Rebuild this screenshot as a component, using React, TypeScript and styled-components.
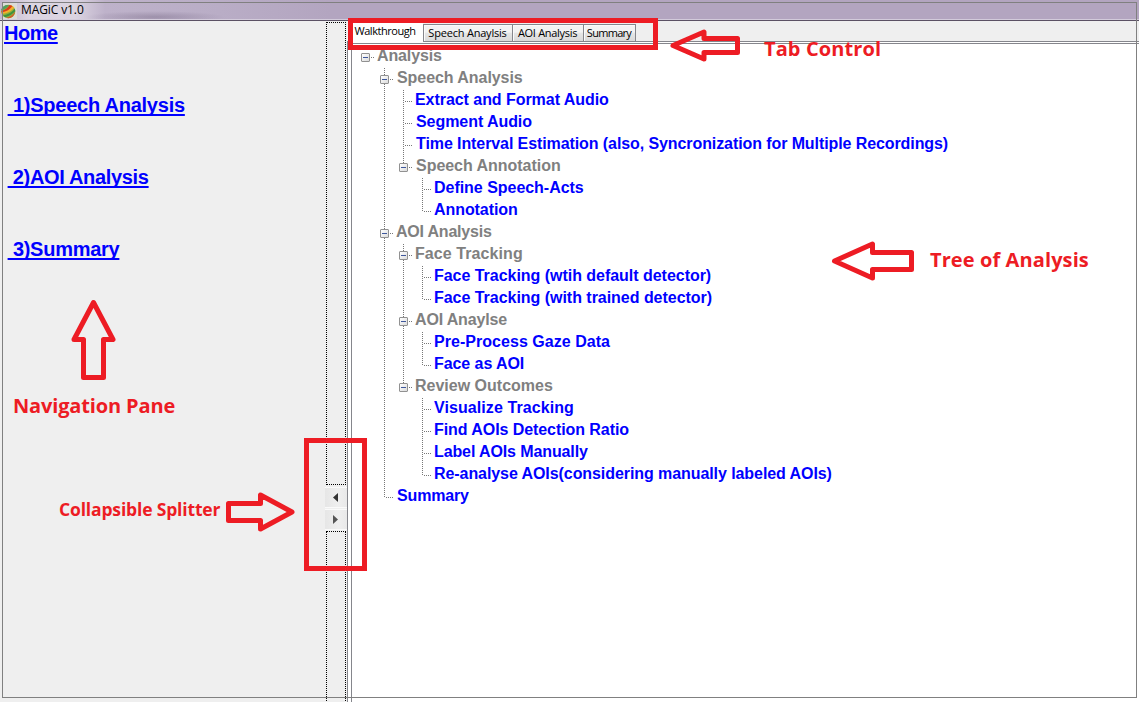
import React from 'react';
import styled, { createGlobalStyle } from 'styled-components';

const RED = '#ed1c24';
const LINE = '#85868c';

const GlobalStyle = createGlobalStyle`
  *, *::before, *::after { box-sizing: border-box; }
  html, body { margin: 0; padding: 0; overflow: hidden; }
  body { font-family: "Liberation Sans", Arial, sans-serif; }
`;

const Window = styled.div`
  position: relative;
  display: flex;
  flex-direction: column;
  width: 1139px;
  height: 702px;
  overflow: hidden;
  background: #efefef;
`;

const TitleBar = styled.header`
  flex: none;
  display: flex;
  align-items: center;
  gap: 4px;
  height: 21px;
  padding: 0 0 0 1px;
  border-bottom: 1px solid #5b5164;
  box-shadow: inset 0 -1px 0 #d3cbdb;
  background:
    radial-gradient(ellipse 70px 6px at 155px 17px, rgba(112, 98, 126, 0.4), transparent),
    linear-gradient(90deg, #c2b6cd 0, #dcd5e2 30px, #dbd4e1 75px, #beb2ca 105px, #b9adc6 220px, #b3a5c0 330px);
`;

const AppTitle = styled.h1`
  margin: 0;
  font: 400 12px/18px "Open Sans", "Noto Sans", sans-serif;
  letter-spacing: -0.1px;
  color: #000;
`;

const Body = styled.div`
  flex: 1;
  display: flex;
  min-height: 0;
`;

const NavPane = styled.nav`
  display: flex;
  flex-direction: column;
  align-items: flex-start;
  gap: 49px;
  width: 325px;
  padding: 1px 0 0 4px;
`;

const NavLink = styled.a<{ $indent?: boolean; $spacing: number }>`
  margin-left: ${p => (p.$indent ? 3.6 : 0)}px;
  font-size: 20px;
  font-weight: 700;
  line-height: 23px;
  letter-spacing: ${p => p.$spacing}px;
  color: #0000ff;
  text-decoration: underline;
  text-decoration-thickness: 2px;
  text-underline-offset: 2px;
  text-decoration-skip-ink: none;
  white-space: pre;
`;

const Splitter = styled.div`
  display: flex;
  flex-direction: column;
  width: 22px;
  padding-top: 1px;
`;

const Grip = styled.div<{ $height: number }>`
  flex: none;
  height: ${p => p.$height}px;
  margin: 0 1px;
  border: 1px dotted #000;
`;

const CollapseButtons = styled.div`
  flex: none;
  display: flex;
  flex-direction: column;
  gap: 1px;
  padding: 2px 0 1px;
`;

const CollapseButton = styled.button`
  display: flex;
  align-items: center;
  justify-content: center;
  height: 21px;
  padding: 0 2px 0 0;
  border: 0;
  border-top: 1px solid #fafafa;
  border-bottom: 1px solid #fafafa;
  background: linear-gradient(90deg, #e6e6e6, #efefef 60%, #e9e9e9);
`;

const Main = styled.main`
  flex: 1;
  display: flex;
  flex-direction: column;
  min-width: 0;
`;

const TabStrip = styled.div`
  flex: none;
  display: flex;
  align-items: flex-end;
  height: 21px;
  border-bottom: 1px solid ${LINE};
  padding-left: 2px;
`;

const Tab = styled.button<{ $active?: boolean; $width: number; $spacing: number }>`
  display: flex;
  justify-content: center;
  align-items: center;
  width: ${p => p.$width}px;
  height: ${p => (p.$active ? 20 : 18)}px;
  margin-bottom: -1px;
  padding: ${p => (p.$active ? '0 2px 3px 0' : '0 1px 0 0')};
  border: solid ${LINE};
  border-width: ${p => (p.$active ? '0' : '1px 1px 1px 0')};
  background: ${p => (p.$active ? '#fff' : 'linear-gradient(#f3f3f3 0 45%, #e6e6e6 50%, #dadada)')};
  box-shadow: ${p => (p.$active ? 'none' : 'inset 1px 1px 0 #fbfbfb')};
  font: 400 11px/14px "Open Sans", "Noto Sans", sans-serif;
  letter-spacing: ${p => p.$spacing}px;
  color: #000;
  white-space: nowrap;
  &:nth-child(2) { border-left-width: 1px; }
`;

const TabPage = styled.section`
  flex: 1;
  display: flex;
  border-left: 1px solid ${LINE};
  padding-left: 3px;
  background: #fff;
`;

const PageInner = styled.div`
  flex: 1;
  margin-top: 1px;
  padding: 2px 0 0 4px;
  border-top: 1px solid ${LINE};
  border-left: 1px solid ${LINE};
`;

const TreeList = styled.ul`
  margin: 0;
  padding: 0;
  list-style: none;
`;

const TreeRow = styled.li`
  display: flex;
  align-items: center;
  height: 22px;
`;

const DOTS_V = 'repeating-linear-gradient(180deg, #777 0 1px, transparent 1px 2px)';
const DOTS_H = 'repeating-linear-gradient(90deg, #777 0 1px, transparent 1px 2px)';

const Guide = styled.span<{ $line: 'none' | 'full' | 'half'; $branch?: boolean }>`
  flex: none;
  display: flex;
  align-items: center;
  width: 19px;
  height: 22px;
  padding: 0 0 1px 5px;
  background-image: ${DOTS_V}, ${DOTS_H};
  background-repeat: no-repeat;
  background-position: 9px 0, 11px 11px;
  background-size:
    ${p => (p.$line === 'none' ? '0 0' : p.$line === 'full' ? '1px 22px' : '1px 12px')},
    ${p => (p.$branch ? '7px 1px' : '0 0')};
`;

const Expander = styled.span`
  display: flex;
  align-items: center;
  justify-content: center;
  width: 9px;
  height: 9px;
  margin-top: 1px;
  border: 1px solid #919191;
  border-radius: 1px;
  background: linear-gradient(135deg, #fff, #dcdcdc);
  &::after {
    content: '';
    width: 5px;
    height: 1px;
    background: #3e579b;
  }
`;

const NodeLabel = styled.span<{ $folder: boolean; $nudge: number; $spacing: number }>`
  margin-left: ${p => 2 + p.$nudge}px;
  padding-bottom: 3px;
  font-size: 16px;
  font-weight: 700;
  line-height: 19px;
  letter-spacing: ${p => p.$spacing}px;
  color: ${p => (p.$folder ? '#808080' : '#0000ff')};
  white-space: nowrap;
`;

const WindowFrame = styled.div`
  position: absolute;
  inset: 2px 2px 4px 2px;
  border: 1px solid #808080;
  pointer-events: none;
`;

const Markup = styled.svg`
  position: absolute;
  inset: 0;
  pointer-events: none;
`;

const Callout = styled.span<{ $x: number; $y: number; $size: number; $spacing: number }>`
  position: absolute;
  left: ${p => p.$x}px;
  top: ${p => p.$y}px;
  font: 700 ${p => p.$size}px/26px "Open Sans", "Noto Sans", sans-serif;
  letter-spacing: ${p => p.$spacing}px;
  color: ${RED};
  white-space: nowrap;
`;

type Node = { label: string; children?: Node[]; nudge?: number; spacing?: number };

const tree: Node = {
  label: 'Analysis',
  spacing: -0.12,
  children: [
    {
      label: 'Speech Analysis',
      nudge: 1,
      spacing: -0.06,
      children: [
        { label: 'Extract and Format Audio', spacing: -0.05 },
        { label: 'Segment Audio', nudge: 1, spacing: -0.06 },
        {
          label: 'Time Interval Estimation (also, Syncronization for Multiple Recordings)',
          nudge: 1,
          spacing: -0.09,
        },
        {
          label: 'Speech Annotation',
          nudge: 1,
          spacing: -0.03,
          children: [{ label: 'Define Speech-Acts', spacing: -0.03 }, { label: 'Annotation', spacing: -0.07 }],
        },
      ],
    },
    {
      label: 'AOI Analysis',
      spacing: -0.2,
      children: [
        {
          label: 'Face Tracking',
          spacing: 0.08,
          children: [
            { label: 'Face Tracking (wtih default detector)', spacing: -0.03 },
            { label: 'Face Tracking (with trained detector)', spacing: -0.03 },
          ],
        },
        {
          label: 'AOI Anaylse',
          spacing: -0.15,
          children: [{ label: 'Pre-Process Gaze Data', spacing: 0.04 }, { label: 'Face as AOI', spacing: -0.07 }],
        },
        {
          label: 'Review Outcomes',
          children: [
            { label: 'Visualize Tracking', spacing: 0.08 },
            { label: 'Find AOIs Detection Ratio', spacing: -0.07 },
            { label: 'Label AOIs Manually', spacing: -0.11 },
            { label: 'Re-analyse AOIs(considering manually labeled AOIs)', spacing: -0.075 },
          ],
        },
      ],
    },
    { label: 'Summary', nudge: 1, spacing: -0.15 },
  ],
};

function TreeNode({ node, trail, last, root }: { node: Node; trail: boolean[]; last: boolean; root?: boolean }) {
  const childTrail = root ? [false] : [...trail, !last];
  return (
    <>
      <TreeRow>
        {trail.map((open, i) => (
          <Guide key={i} $line={open ? 'full' : 'none'} />
        ))}
        <Guide $line={root ? 'none' : last ? 'half' : 'full'} $branch>
          {node.children && <Expander />}
        </Guide>
        <NodeLabel $folder={!!node.children} $nudge={node.nudge ?? 0} $spacing={node.spacing ?? 0}>
          {node.label}
        </NodeLabel>
      </TreeRow>
      {node.children?.map((child, i) => (
        <TreeNode key={child.label} node={child} trail={childTrail} last={i === node.children!.length - 1} />
      ))}
    </>
  );
}

function AppIcon() {
  return (
    <svg width="16" height="17" viewBox="0 0 16 17">
      <rect x="1" width="15" height="17" fill="#dcdcd8" />
      <ellipse cx="7.300" cy="9.500" rx="7" ry="6.800" fill="#8fb03a" />
      <path d="M0 8Q2 2.500 8 3Q6 6 0.500 8.500Z" fill="#4f9e62" />
      <path d="M0.500 9.500Q7 8 9.500 3L13.500 5.500Q9 11 0.800 12Z" fill="#f3b02c" />
      <path d="M0.500 9Q6 7.500 8.500 3L11.500 4Q8 9 0.500 10.500Z" fill="#dc3a1c" />
      <path d="M2 13.500Q10 12 13.800 6.500L14.300 9Q10 14 4 15.200Z" fill="#3f9140" />
      <path d="M5 16Q11 14.500 14.300 9.500Q13 15 8 16.300Z" fill="#d9542a" />
    </svg>
  );
}

const arrows = [
  '673,45.5 704,32 704,38.5 737.5,38.5 737.5,52.5 704,52.5 704,59',
  '834.5,261 872.5,244 872.5,252.5 911.5,252.5 911.5,269.5 872.5,269.5 872.5,278',
  '93.5,302.5 113,339.5 103.5,339.5 103.5,377.5 83.5,377.5 83.5,339.5 74,339.5',
  '292,512 260.5,495 260.5,503.5 228.5,503.5 228.5,520.5 260.5,520.5 260.5,529',
];

export default function App() {
  return (
    <Window>
      <GlobalStyle />
      <TitleBar>
        <AppIcon />
        <AppTitle>MAGiC v1.0</AppTitle>
      </TitleBar>
      <Body>
        <NavPane>
          <NavLink $spacing={-0.45}>Home</NavLink>
          <NavLink $indent $spacing={-0.24}>{'\u00a01)Speech Analysis'}</NavLink>
          <NavLink $indent $spacing={-0.33}>{'\u00a02)AOI Analysis'}</NavLink>
          <NavLink $indent $spacing={-0.27}>{'\u00a03)Summary'}</NavLink>
        </NavPane>
        <Splitter>
          <Grip $height={463} />
          <CollapseButtons>
            <CollapseButton aria-label="Collapse left">
              <svg width="5" height="9" viewBox="0 0 5 9"><path d="M5 0V9L0 4.500Z" fill="#333" /></svg>
            </CollapseButton>
            <CollapseButton aria-label="Collapse right">
              <svg width="5" height="9" viewBox="0 0 5 9"><path d="M0 0V9L5 4.500Z" fill="#555" /></svg>
            </CollapseButton>
          </CollapseButtons>
          <Grip $height={180} />
        </Splitter>
        <Main>
          <TabStrip>
            <Tab $active $width={74} $spacing={-0.45}>Walkthrough</Tab>
            <Tab $width={90} $spacing={-0.2}>Speech Anaylsis</Tab>
            <Tab $width={71} $spacing={-0.3}>AOI Analysis</Tab>
            <Tab $width={52} $spacing={-0.7}>Summary</Tab>
          </TabStrip>
          <TabPage>
            <PageInner>
              <TreeList>
                <TreeNode node={tree} trail={[]} last root />
              </TreeList>
            </PageInner>
          </TabPage>
        </Main>
      </Body>
      <WindowFrame />
      <Markup width="1139" height="702" fill="none" stroke={RED} strokeWidth="5" strokeLinejoin="round">
        <rect x="350.5" y="20.5" width="305" height="27" strokeLinejoin="miter" />
        <rect x="306.500" y="440.500" width="58" height="128" strokeLinejoin="miter" />
        {arrows.map(points => (
          <polygon key={points} points={points} />
        ))}
      </Markup>
      <Callout $x={764} $y={36} $size={20} $spacing={0.1}>Tab Control</Callout>
      <Callout $x={930} $y={247} $size={20} $spacing={0.1}>Tree of Analysis</Callout>
      <Callout $x={13} $y={393} $size={20} $spacing={-0.15}>Navigation Pane</Callout>
      <Callout $x={59} $y={496} $size={17.5} $spacing={-0.16}>Collapsible Splitter</Callout>
    </Window>
  );
}
